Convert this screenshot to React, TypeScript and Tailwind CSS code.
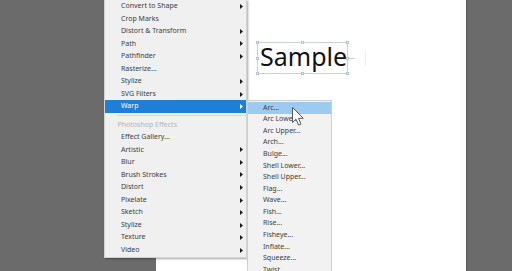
import React from 'react';

type Item = { label: string; sub?: boolean; header?: boolean; active?: boolean; sep?: boolean };

const mainItems: Item[] = [
  { label: 'Convert to Shape', sub: true },
  { label: 'Crop Marks' },
  { label: 'Distort & Transform', sub: true },
  { label: 'Path', sub: true },
  { label: 'Pathfinder', sub: true },
  { label: 'Rasterize...' },
  { label: 'Stylize', sub: true },
  { label: 'SVG Filters', sub: true },
  { label: 'Warp', sub: true, active: true },
  { label: '', sep: true },
  { label: 'Photoshop Effects', header: true },
  { label: 'Effect Gallery...' },
  { label: 'Artistic', sub: true },
  { label: 'Blur', sub: true },
  { label: 'Brush Strokes', sub: true },
  { label: 'Distort', sub: true },
  { label: 'Pixelate', sub: true },
  { label: 'Sketch', sub: true },
  { label: 'Stylize', sub: true },
  { label: 'Texture', sub: true },
  { label: 'Video', sub: true },
];

const warpItems = [
  'Arc...', 'Arc Lower...', 'Arc Upper...', 'Arch...', 'Bulge...', 'Shell Lower...', 'Shell Upper...',
  'Flag...', 'Wave...', 'Fish...', 'Rise...', 'Fisheye...', 'Inflate...', 'Squeeze...', 'Twist...',
];

function Caret({ white }: { white?: boolean }) {
  return (
    <svg width="3" height="5" viewBox="0 0 3 5" className="shrink-0">
      <path d="M0 0 L3 2.5 L0 5 Z" fill={white ? '#ffffff' : '#1a1a1a'} />
    </svg>
  );
}

function MainMenu() {
  return (
    <div className="absolute left-[104px] top-0 w-[143px] border-x border-b border-[#d2d2d2] bg-[#f0f0f0] shadow-[1px_1px_2px_rgba(0,0,0,0.35)]">
      {mainItems.map((it, i) => {
        if (it.sep) {
          return (
            <div key={i} className="flex h-[5.6px] items-center pl-[12px]">
              <div className="h-px w-full bg-[#d9d9d9]" />
            </div>
          );
        }
        if (it.header) {
          return (
            <div key={i} className="flex h-[12.55px] items-center pl-[12.5px] text-[7px] text-[#b4b4b4]">
              {it.label}
            </div>
          );
        }
        return (
          <div
            key={i}
            className={`flex h-[12.55px] items-center justify-between pl-[16px] pr-[3px] text-[7px] ${
              it.active ? 'bg-[#1f7fd6] text-white' : 'text-[#3d3d3d]'
            }`}
          >
            <span>{it.label}</span>
            {it.sub && <Caret white={it.active} />}
          </div>
        );
      })}
    </div>
  );
}

function WarpMenu() {
  return (
    <div className="absolute left-[247px] top-[100px] w-[85px] border-x border-t border-[#cfcfcf] bg-[#f2f2f2] pt-px">
      {warpItems.map((label, i) => (
        <div
          key={label}
          className={`flex h-[11.6px] items-center pl-[15px] text-[7px] text-[#3d3d3d] ${
            i === 0 ? 'bg-[#9dcbf0]' : ''
          }`}
        >
          {label}
        </div>
      ))}
    </div>
  );
}

function Handle() {
  return <div className="h-[3px] w-[3px] border border-[#b7c0d6] bg-white" />;
}

function SampleBox() {
  return (
    <div className="relative h-[32px] w-[91px] border border-[#c9d0e0] pl-[2px] pt-px">
      <span className="block text-[25px] leading-none text-[#111]">Sample</span>
      {/* selection handles */}
      <div className="absolute -inset-[2px] flex flex-col justify-between">
        <div className="flex justify-between"><Handle /><Handle /><Handle /></div>
        <div className="flex items-center justify-between">
          <Handle />
          <div className="flex items-center">
            <Handle />
            <div className="-mr-[6px] h-px w-[6px] bg-[#c9d0e0]" />
          </div>
        </div>
        <div className="flex justify-between"><Handle /><Handle /><Handle /></div>
      </div>
    </div>
  );
}

function Cursor() {
  return (
    <svg className="absolute left-[292px] top-[107px]" width="13" height="19" viewBox="0 0 13 19">
      <path
        d="M0.5 0.5 L0.5 15.5 L4 12.2 L6.6 18 L9 17 L6.5 11.3 L11.3 11.3 Z"
        fill="#ffffff"
        stroke="#555555"
        strokeWidth="1"
        strokeLinejoin="round"
      />
    </svg>
  );
}

export default function App() {
  return (
    <div className="relative h-[271px] w-[512px] overflow-hidden bg-[#6b6b6b] font-['Noto_Sans',sans-serif]">
      <div className="flex h-full">
        <div className="w-[156px] shrink-0" />
        <div className="h-full w-[311px] shrink-0 border-r border-[#5a5a5a] bg-white pl-[101px] pt-[42px]">
          <div className="flex items-center gap-[17px]">
            <SampleBox />
            <div className="h-[16px] w-px bg-[#eeeeee]" />
          </div>
        </div>
      </div>
      <MainMenu />
      <WarpMenu />
      <Cursor />
    </div>
  );
}
